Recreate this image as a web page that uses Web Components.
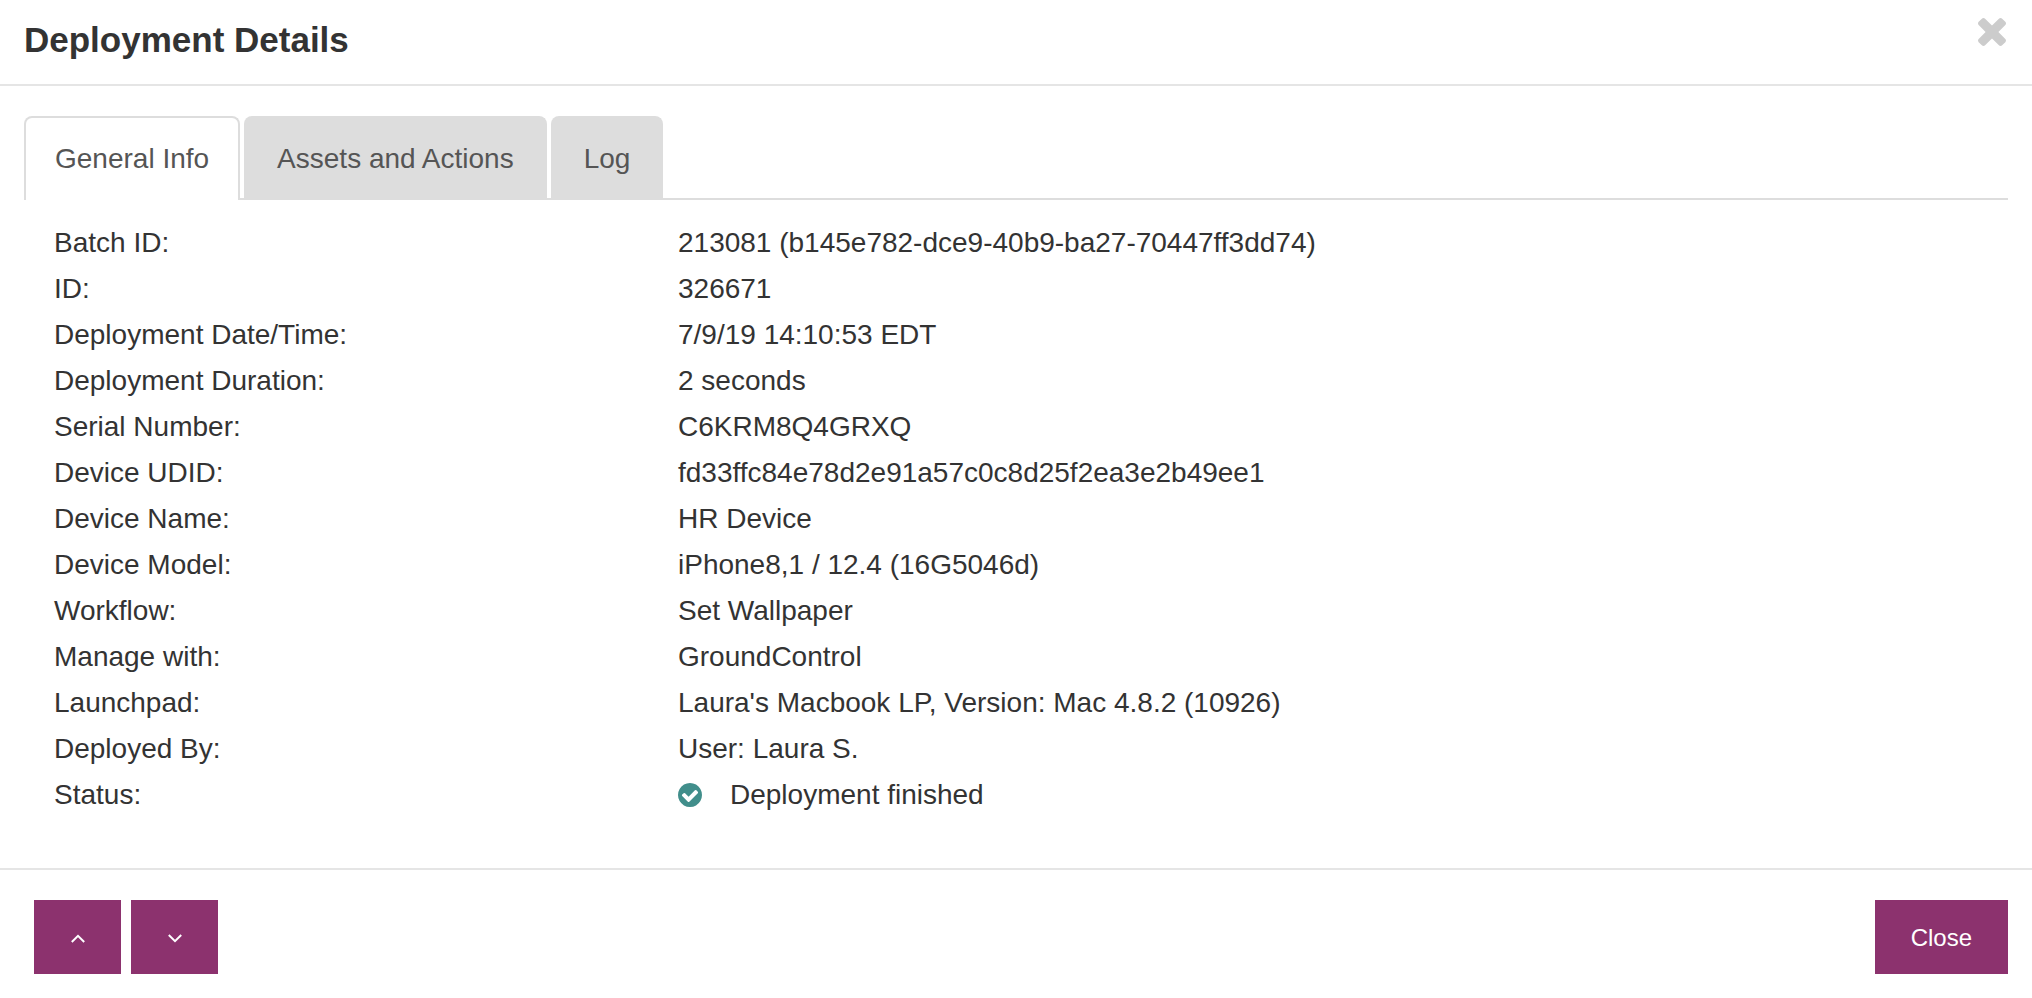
<!DOCTYPE html>
<html lang="en">
<head>
<meta charset="utf-8">
<meta name="viewport" content="width=device-width, initial-scale=1">
<title>Deployment Details</title>
<style>
  body {
    margin: 0;
    background: #fff;
    color: #333;
    font: 28px/46px "Liberation Sans", Arial, sans-serif;
  }
</style>
</head>
<body>
<details-dialog>
  <span slot="title">Deployment Details</span>
  <tab-strip>
    <tab-item active>General Info</tab-item>
    <tab-item>Assets and Actions</tab-item>
    <tab-item>Log</tab-item>
  </tab-strip>
  <detail-list>
    <detail-row label="Batch ID:">213081 (b145e782-dce9-40b9-ba27-70447ff3dd74)</detail-row>
    <detail-row label="ID:">326671</detail-row>
    <detail-row label="Deployment Date/Time:">7/9/19 14:10:53 EDT</detail-row>
    <detail-row label="Deployment Duration:">2 seconds</detail-row>
    <detail-row label="Serial Number:">C6KRM8Q4GRXQ</detail-row>
    <detail-row label="Device UDID:">fd33ffc84e78d2e91a57c0c8d25f2ea3e2b49ee1</detail-row>
    <detail-row label="Device Name:">HR Device</detail-row>
    <detail-row label="Device Model:">iPhone8,1 / 12.4 (16G5046d)</detail-row>
    <detail-row label="Workflow:">Set Wallpaper</detail-row>
    <detail-row label="Manage with:">GroundControl</detail-row>
    <detail-row label="Launchpad:">Laura's Macbook LP, Version: Mac 4.8.2 (10926)</detail-row>
    <detail-row label="Deployed By:">User: Laura S.</detail-row>
    <detail-row label="Status:"><status-text>Deployment finished</status-text></detail-row>
  </detail-list>
  <action-button slot="nav" label="Previous deployment">
    <svg width="14" height="9" viewBox="0 0 14 9" fill="none" stroke="currentColor" stroke-width="2"><path d="M.8 8 7 1.8 13.2 8"/></svg>
  </action-button>
  <action-button slot="nav" label="Next deployment">
    <svg width="14" height="9" viewBox="0 0 14 9" fill="none" stroke="currentColor" stroke-width="2"><path d="M.8 1 7 7.2 13.2 1"/></svg>
  </action-button>
  <action-button slot="actions">Close</action-button>
</details-dialog>

<script>
  const define = (name, html, setup) => {
    const template = document.createElement('template');
    template.innerHTML = html;
    customElements.define(name, class extends HTMLElement {
      constructor() {
        super();
        this.attachShadow({ mode: 'open' }).append(template.content.cloneNode(true));
      }
      connectedCallback() {
        if (setup) setup(this, this.shadowRoot);
      }
    });
  };

  define('details-dialog', `
    <style>
      :host { display: block; }
      header {
        display: flex; justify-content: space-between; align-items: flex-start;
        padding: 16px 24px 20px; border-bottom: 2px solid #e5e5e5;
      }
      h1 { margin: 0; font-size: 35px; line-height: 48px; font-weight: 700; }
      .dismiss { display: flex; margin: 0; padding: 2px; border: 0; background: none; color: #ccc; cursor: pointer; }
      main { padding: 30px 24px 50px; }
      footer {
        display: flex; justify-content: space-between;
        padding: 30px 24px 24px 34px; border-top: 2px solid #e5e5e5;
      }
      nav { display: flex; gap: 10px; }
    </style>
    <section role="dialog" aria-labelledby="heading">
      <header>
        <h1 id="heading"><slot name="title"></slot></h1>
        <button class="dismiss" type="button" aria-label="Dismiss">
          <svg width="28" height="28" viewBox="110 302 1188 1188" fill="currentColor"><path d="M1298 1322q0 40-28 68l-136 136q-28 28-68 28t-68-28L704 1232l-294 294q-28 28-68 28t-68-28l-136-136q-28-28-28-68t28-68l294-294-294-294q-28-28-28-68t28-68l136-136q28-28 68-28t68 28l294 294 294-294q28-28 68-28t68 28l136 136q28 28 28 68t-28 68L976 960l294 294q28 28 28 68z" transform="translate(0 -64)"/></svg>
        </button>
      </header>
      <main><slot></slot></main>
      <footer>
        <nav aria-label="Deployments"><slot name="nav"></slot></nav>
        <div><slot name="actions"></slot></div>
      </footer>
    </section>`);

  define('tab-strip', `
    <style>
      :host { display: block; border-bottom: 2px solid #ddd; }
      div { display: flex; gap: 4px; }
    </style>
    <div role="tablist"><slot></slot></div>`);

  define('tab-item', `
    <style>
      :host { display: block; color: #555; }
      :host([active]) { margin-bottom: -2px; }
      button {
        display: block; margin: 0; padding: 18px 31px 16px; font: inherit; color: inherit; cursor: pointer;
        background: #ddd; border: 2px solid #ddd; border-bottom: 0; border-radius: 8px 8px 0 0;
      }
      :host([active]) button { background: #fff; padding: 18px 29px; }
    </style>
    <button type="button" role="tab"><slot></slot></button>`,
    (host, root) => root.querySelector('button').setAttribute('aria-selected', host.hasAttribute('active')));

  define('detail-list', `
    <style>
      :host { display: block; padding: 20px 4px 0 30px; }
    </style>
    <slot></slot>`);

  define('detail-row', `
    <style>
      :host { display: block; }
      dl { display: grid; grid-template-columns: 8fr 17fr; margin: 0; }
      dd { margin: 0; }
    </style>
    <dl><dt></dt><dd><slot></slot></dd></dl>`,
    (host, root) => { root.querySelector('dt').textContent = host.getAttribute('label'); });

  define('status-text', `
    <style>
      :host { display: flex; align-items: center; gap: 28px; }
      svg { flex: none; }
    </style>
    <svg width="24" height="24" viewBox="0 0 1536 1536" aria-hidden="true"><path fill="#418e8b" d="M1284 606q0-28-18-46l-91-90q-19-19-45-19t-45 19L677 877 451 651q-19-19-45-19t-45 19l-91 90q-18 18-18 46 0 27 18 45l362 362q19 19 45 19 27 0 46-19l543-543q18-18 18-45zm252 162q0 209-103 385.500T1153.500 1433 768 1536t-385.500-103T103 1153.500 0 768t103-385.500T382.500 103 768 0t385.500 103T1433 382.500 1536 768z"/></svg>
    <span><slot></slot></span>`);

  define('action-button', `
    <style>
      :host { display: block; }
      button {
        display: flex; align-items: center; justify-content: center;
        min-width: 87px; height: 74px; margin: 0; padding: 2px 36px 0;
        border: 0; background: #8c326e; color: #fff; font: inherit; font-size: 24px; cursor: pointer;
      }
    </style>
    <button type="button"><slot></slot></button>`,
    (host, root) => {
      const label = host.getAttribute('label');
      if (label) root.querySelector('button').setAttribute('aria-label', label);
    });
</script>
</body>
</html>
